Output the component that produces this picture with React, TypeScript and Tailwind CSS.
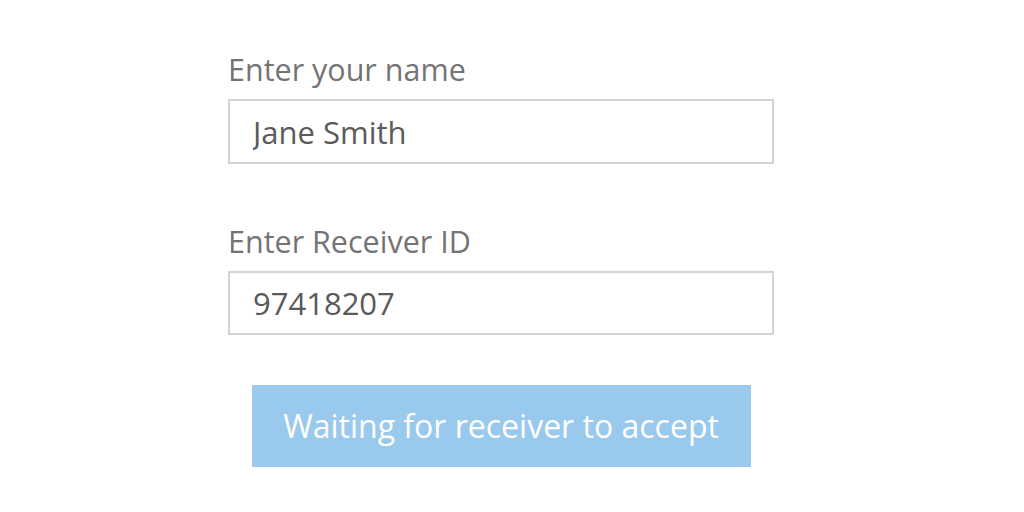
import { useState } from "react";

export default function App() {
  const [name, setName] = useState("Jane Smith");
  const [receiverId, setReceiverId] = useState("97418207");

  return (
    <div
      className="w-[1024px] h-[512px] bg-white overflow-hidden"
      style={{ fontFamily: '"Open Sans", "Noto Sans", sans-serif' }}
    >
      <div className="ml-[228px] w-[546px] pt-[50px] flex flex-col">
        <label className="text-[30.5px] leading-[38px] text-[#747474]">
          Enter your name
        </label>
        <input
          value={name}
          onChange={(e) => setName(e.target.value)}
          className="mt-[11px] h-[65px] w-full border-2 border-[#d4d4d4] px-[23px] text-[31px] text-[#5a5a5a] outline-none"
        />

        <label className="mt-[58px] text-[30.5px] leading-[38px] text-[#747474]">
          Enter Receiver ID
        </label>
        <input
          value={receiverId}
          onChange={(e) => setReceiverId(e.target.value)}
          className="mt-[11px] h-[64px] w-full border-2 border-[#d4d4d4] px-[23px] text-[31px] text-[#5a5a5a] outline-none"
        />

        <button
          disabled
          className="mt-[50px] mx-auto w-[499px] h-[82px] bg-[#99c9ec] text-white text-[32px]"
        >
          Waiting for receiver to accept
        </button>
      </div>
    </div>
  );
}
